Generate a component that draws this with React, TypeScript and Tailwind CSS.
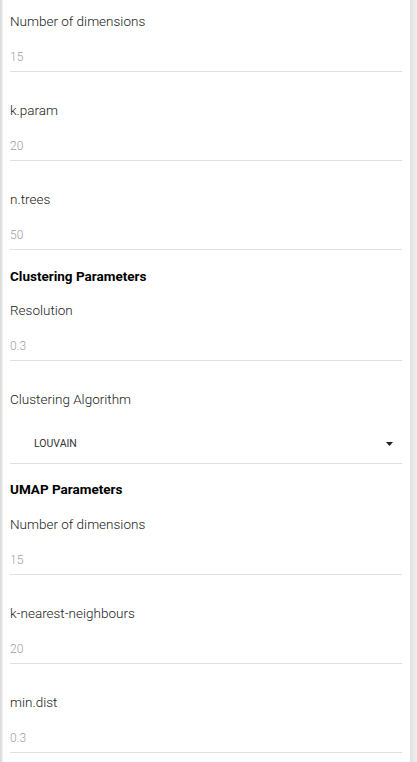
const font = { fontFamily: 'Roboto, "Liberation Sans", sans-serif' };

function Field({ label, value, first }: { label: string; value: string; first?: boolean }) {
  return (
    <div className={first ? '' : 'mt-[28px]'}>
      <div className="text-[13.5px] leading-[20px] font-light text-[#212121]">{label}</div>
      <div className="mt-[16px] pb-[4px] border-b border-[#e0e0e0]">
        <div className="text-[12px] leading-[20px] font-light text-[#9e9e9e]">{value}</div>
      </div>
    </div>
  );
}

export default function App() {
  return (
    <div style={font} className="flex w-[417px] h-[762px] overflow-hidden bg-white">
      <div className="w-[3px] bg-gradient-to-r from-[#d6d6d6] to-[#f2f2f2]" />
      <div className="w-[407px] pt-[11px] pl-[7px] pr-[8px]">
        <Field first label="Number of dimensions" value="15" />
        <Field label="k.param" value="20" />
        <Field label="n.trees" value="50" />

        <div className="mt-[16px] mb-[-14px] text-[13.5px] leading-[20px] font-bold text-black">
          Clustering Parameters
        </div>
        <Field label="Resolution" value="0.3" />

        <div className="mt-[28px]">
          <div className="text-[13.5px] leading-[20px] font-light text-[#212121]">Clustering Algorithm</div>
          <div className="mt-[16px] h-[39px] flex items-center justify-between border-b border-[#e0e0e0] pl-[24px] pr-[9px]">
            <span className="text-[10.5px] font-normal text-[#333]">LOUVAIN</span>
            <svg width="7" height="4" viewBox="0 0 7 4">
              <path d="M0 0h7L3.5 4z" fill="#222" />
            </svg>
          </div>
        </div>

        <div className="mt-[15px] mb-[-13px] text-[13.5px] leading-[20px] font-bold text-black">
          UMAP Parameters
        </div>
        <Field label="Number of dimensions" value="15" />
        <Field label="k-nearest-neighbours" value="20" />
        <Field label="min.dist" value="0.3" />
      </div>
      <div className="w-[7px] bg-gradient-to-r from-[#e2e2e2] to-[#f0f0f0]" />
    </div>
  );
}
